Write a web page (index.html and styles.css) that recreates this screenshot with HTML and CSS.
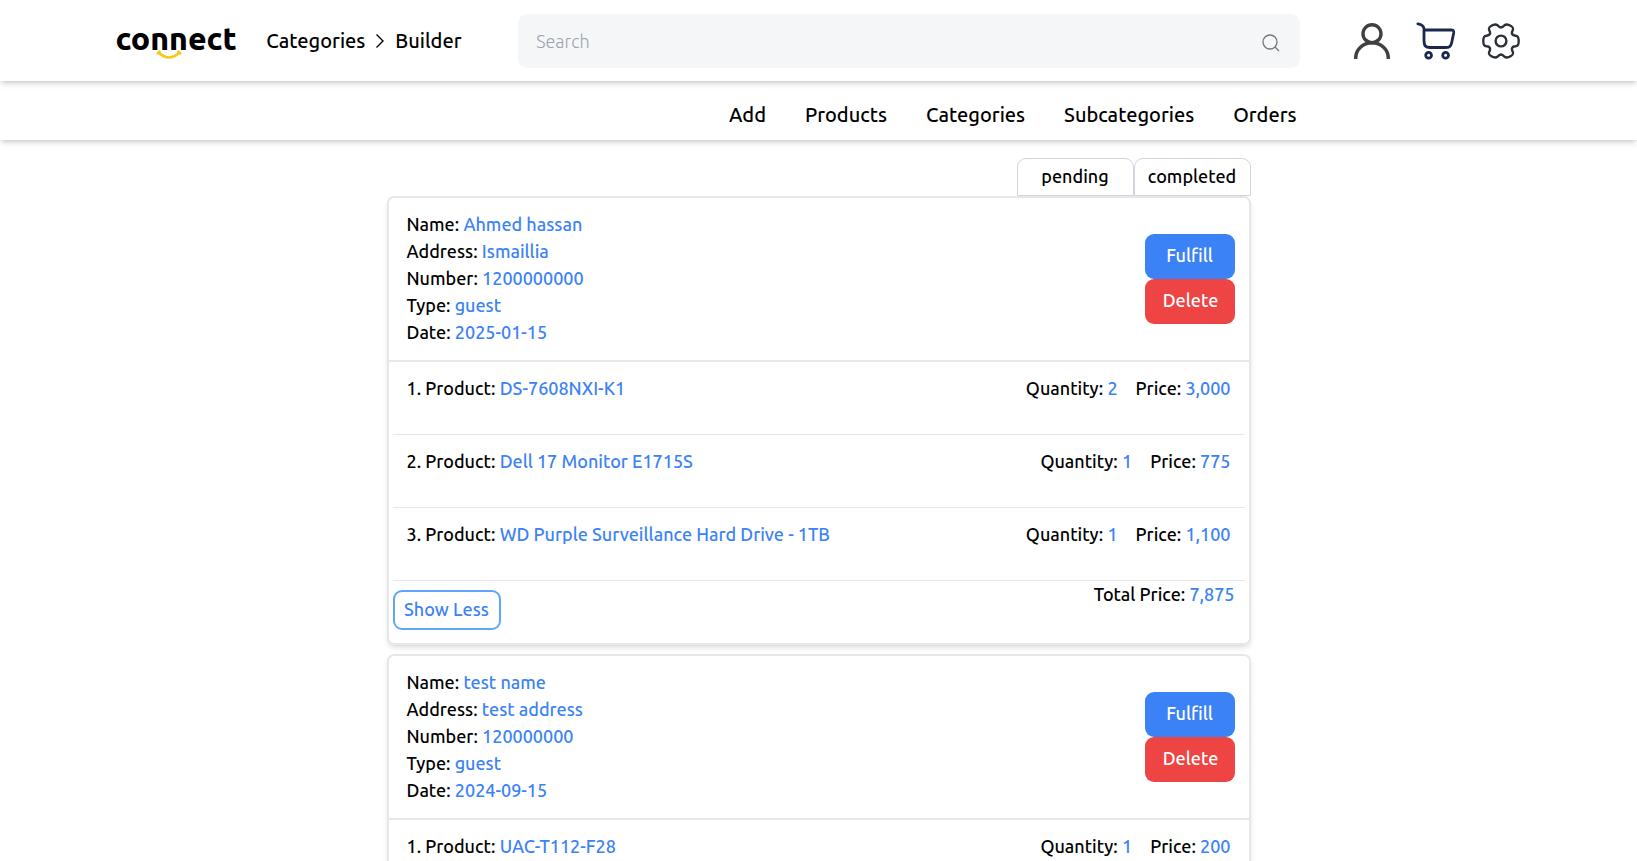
FILE: index.html
```html
<!DOCTYPE html>
<html lang="en">
<head>
<meta charset="utf-8">
<title>Connect – Orders</title>
<meta name="viewport" content="width=device-width, initial-scale=1">
<link rel="stylesheet" href="styles.css">
</head>
<body>
<header class="topbar">
  <a class="logo" href="#">
    <span class="logo-word">connect</span>
    <svg class="logo-smile" viewBox="0 0 26 10" aria-hidden="true"><path d="M2.500 2.500Q13 12.500 23.500 2.500M1 4L4.500 1M21.500 1L25 4" fill="none" stroke="#f5c918" stroke-width="2.600"/></svg>
  </a>
  <nav class="crumbs" aria-label="Breadcrumb">
    <a href="#">Categories</a>
    <svg class="chevron" viewBox="0 0 10 16" aria-hidden="true"><path d="M1.500 1.500L8 8L1.500 14.500" fill="none" stroke="#000" stroke-width="1.400"/></svg>
    <a href="#">Builder</a>
  </nav>
  <form class="search">
    <input class="search-input" type="search" placeholder="Search" aria-label="Search">
    <button class="search-button" type="button" aria-label="Submit search">
      <svg class="search-icon" viewBox="0 0 18 18" aria-hidden="true"><circle cx="8" cy="8" r="7" fill="none" stroke="#777" stroke-width="1.300"/><path d="M13 13L17 17" stroke="#777" stroke-width="1.300"/></svg>
    </button>
  </form>
  <div class="actions">
    <a href="#" aria-label="Account">
      <svg class="icon-user" viewBox="0 0 36 36"><g fill="none" stroke="#404040" stroke-width="3.400"><circle cx="18" cy="10.700" r="9"/><path d="M1.700 36V35A16.300 15.300 0 0 1 34.300 35V36"/></g></svg>
    </a>
    <a href="#" aria-label="Cart">
      <svg class="icon-cart" viewBox="0 0 40 38"><g fill="none" stroke="#1c2850" stroke-width="2.800" stroke-linecap="round" stroke-linejoin="round"><path d="M1.800 1.800C5 2.300 7.800 3.300 8 7V18C8 24 9.500 25.500 14 25.500H29C33 25.500 34.800 25 35.600 21L37.700 11C38 8.500 37 8 35 8H8.500"/><circle cx="12.600" cy="33.200" r="2.900"/><circle cx="29.600" cy="33.200" r="2.900"/></g></svg>
    </a>
    <a href="#" aria-label="Settings">
      <svg class="icon-gear" viewBox="0 0 38 36"><g fill="none" stroke="#2b3036" stroke-width="2.400" stroke-linejoin="round"><circle cx="19" cy="18" r="5.400"/><path d="M15.500 2.200C13.500 .8 11.500 1.500 9 3C6.500 4.300 6.500 5.500 7.500 7.800C8.800 10.500 8 12.500 4.500 12.700C1.700 13 1.300 14.500 1.300 18C1.300 21.500 1.700 23 4.500 23.300C8 23.500 8.800 25.500 7.500 28.200C6.500 30.500 6.500 31.700 9 33C11.500 34.500 13.500 35.200 15.500 33.800C18 30.800 20 30.800 22.500 33.800C24.500 35.200 26.500 34.500 29 33C31.500 31.700 31.500 30.500 30.500 28.200C29.200 25.500 30 23.500 33.500 23.300C36.300 23 36.700 21.500 36.700 18C36.700 14.500 36.300 13 33.500 12.700C30 12.500 29.200 10.500 30.500 7.800C31.500 5.500 31.500 4.300 29 3C26.500 1.500 24.500 .8 22.500 2.200C20 5.200 18 5.200 15.500 2.200Z"/></g></svg>
    </a>
  </div>
</header>
<nav class="subnav" aria-label="Admin">
  <a href="#">Add</a>
  <a href="#">Products</a>
  <a href="#">Categories</a>
  <a href="#">Subcategories</a>
  <a href="#">Orders</a>
</nav>
<main class="orders">
  <div class="tabs">
    <button class="tab" type="button">pending</button>
    <button class="tab" type="button">completed</button>
  </div>
  <article class="order">
    <div class="order-head">
      <div class="customer">
        <p>Name: <span class="value">Ahmed hassan</span></p>
        <p>Address: <span class="value">Ismaillia</span></p>
        <p>Number: <span class="value">1200000000</span></p>
        <p>Type: <span class="value">guest</span></p>
        <p>Date: <span class="value">2025-01-15</span></p>
      </div>
      <div class="order-actions">
        <button class="btn btn-fulfill" type="button">Fulfill</button>
        <button class="btn btn-delete" type="button">Delete</button>
      </div>
    </div>
    <div class="items">
      <div class="item">
        <p>1. Product: <span class="value">DS-7608NXI-K1</span></p>
        <div class="amounts"><p>Quantity: <span class="value">2</span></p><p>Price: <span class="value">3,000</span></p></div>
      </div>
      <div class="item">
        <p>2. Product: <span class="value">Dell 17 Monitor E1715S</span></p>
        <div class="amounts"><p>Quantity: <span class="value">1</span></p><p>Price: <span class="value">775</span></p></div>
      </div>
      <div class="item">
        <p>3. Product: <span class="value">WD Purple Surveillance Hard Drive - 1TB</span></p>
        <div class="amounts"><p>Quantity: <span class="value">1</span></p><p>Price: <span class="value">1,100</span></p></div>
      </div>
    </div>
    <div class="order-foot">
      <button class="btn-toggle" type="button">Show Less</button>
      <p>Total Price: <span class="value">7,875</span></p>
    </div>
  </article>
  <article class="order">
    <div class="order-head">
      <div class="customer">
        <p>Name: <span class="value">test name</span></p>
        <p>Address: <span class="value">test address</span></p>
        <p>Number: <span class="value">120000000</span></p>
        <p>Type: <span class="value">guest</span></p>
        <p>Date: <span class="value">2024-09-15</span></p>
      </div>
      <div class="order-actions">
        <button class="btn btn-fulfill" type="button">Fulfill</button>
        <button class="btn btn-delete" type="button">Delete</button>
      </div>
    </div>
    <div class="items">
      <div class="item">
        <p>1. Product: <span class="value">UAC-T112-F28</span></p>
        <div class="amounts"><p>Quantity: <span class="value">1</span></p><p>Price: <span class="value">200</span></p></div>
      </div>
    </div>
  </article>
</main>
</body>
</html>
```
FILE: styles.css
```css
* { box-sizing: border-box; }
body {
  margin: 0;
  background: #fff;
  color: #000;
  font-family: Ubuntu, "Noto Sans", sans-serif;
  font-size: 18px;
  font-weight: 500;
  line-height: 27px;
}
p { margin: 0; }
a { color: inherit; text-decoration: none; }
button, input { font: inherit; color: inherit; }
button { cursor: pointer; }
svg { display: block; }

.topbar {
  display: flex;
  align-items: center;
  padding: 14px 7.1vw 13px;
  box-shadow: 0 4px 6px -1px rgba(0, 0, 0, .14), 0 2px 4px -2px rgba(0, 0, 0, .14);
}
.logo {
  display: flex;
  flex-direction: column;
  align-items: center;
  width: 120px;
  margin-right: 30px;
}
.logo-word {
  font-size: 32px;
  font-weight: 800;
  line-height: 32px;
}
.logo-smile { width: 26px; height: 10px; margin: -4px 14px 0 0; }
.crumbs { display: flex; align-items: center; gap: 10px; width: 198px; padding-bottom: 2px; font-size: 20px; }
.chevron { width: 10px; height: 16px; margin-top: 2px; }
.search {
  display: flex;
  align-items: center;
  flex: 1;
  margin: 0 54px;
  height: 54px;
  padding: 0 18px;
  border-radius: 9px;
  background: #f4f6f8;
}
.search-input {
  flex: 1;
  min-width: 0;
  padding: 0;
  border: 0;
  outline: 0;
  background: transparent;
  font-weight: 300;
}
.search-input::placeholder { color: #9ca3af; opacity: 1; }
.search-button { padding: 4px 2px 0; border: 0; background: transparent; }
.search-icon { width: 18px; height: 18px; }
.actions { display: flex; align-items: center; gap: 26px; margin-right: 1px; }
.icon-user { width: 36px; height: 36px; }
.icon-cart { width: 40px; height: 38px; }
.icon-gear { width: 38px; height: 36px; }

.subnav {
  display: flex;
  justify-content: flex-end;
  gap: 39px;
  padding: 20px 20.8vw 12px;
  font-size: 20px;
  box-shadow: 0 4px 6px -1px rgba(0, 0, 0, .14), 0 2px 4px -2px rgba(0, 0, 0, .14);
}

.orders { max-width: 864px; margin: 0 auto; padding-top: 18px; }
.tabs { display: flex; justify-content: flex-end; }
.tab {
  width: 117px;
  height: 38px;
  padding: 0 0 2px;
  border: 1px solid #d1d5db;
  border-radius: 9px 9px 0 0;
  background: #fff;
}
.order {
  margin-bottom: 9px;
  border: 2px solid #e5e7eb;
  border-radius: 7px;
  box-shadow: 0 4px 6px -1px rgba(0, 0, 0, .1), 0 2px 4px -2px rgba(0, 0, 0, .1);
}
.value { color: #3b82f6; }
.order-head {
  display: flex;
  align-items: center;
  justify-content: space-between;
  padding: 13px 14px 14px 18px;
  border-bottom: 2px solid #e5e7eb;
}
.order-actions { display: flex; flex-direction: column; }
.btn {
  width: 90px;
  height: 45px;
  border: 0;
  border-radius: 9px;
  color: #fff;
  padding: 0 0 2px;
}
.btn-fulfill { background: #3b82f6; }
.btn-delete { background: #ef4444; padding-left: 2px; }
.items { padding: 0 4px; }
.item {
  display: flex;
  justify-content: space-between;
  padding: 13px 14px 32px;
  border-bottom: 1px solid #e5e7eb;
}
.amounts { display: flex; gap: 18px; }
.order-foot {
  display: flex;
  align-items: flex-start;
  justify-content: space-between;
  padding: 0 14px 13px 4px;
}
.btn-toggle {
  width: 108px;
  height: 40px;
  margin-top: 9px;
  padding: 0 0 2px;
  border: 2px solid #60a5fa;
  border-radius: 9px;
  background: #fff;
  color: #3b82f6;
}
```
